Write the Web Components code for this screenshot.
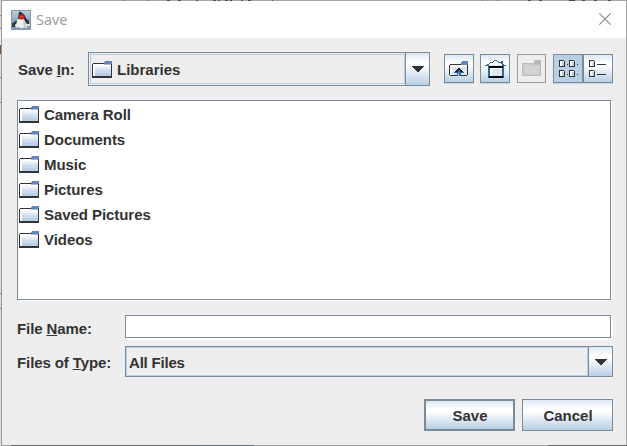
<!DOCTYPE html>
<html lang="en"><head><meta charset="utf-8"><title>Save</title>
<style>
html,body{margin:0;width:627px;height:446px;overflow:hidden;background:#a5a5a5}
body{font:bold 15px/18px "Liberation Sans",Arial,sans-serif;color:#333}
</style></head><body>
<save-dialog></save-dialog>
<script>
const define=(name,html,setup)=>{
  const t=document.createElement('template');t.innerHTML=html;
  customElements.define(name,class extends HTMLElement{
    constructor(){super();this.attachShadow({mode:'open'}).append(t.content.cloneNode(true));}
    connectedCallback(){if(setup)setup(this,this.shadowRoot);}
  });
};
const svg=(w,h,s)=>`<svg width="${w}" height="${h}" viewBox="0 0 ${w} ${h}" shape-rendering="crispEdges">${s}</svg>`;

define('folder-icon',`<style>:host{display:block;width:20px;height:17px;flex:none}svg{display:block}</style>
${svg(20,17,`<path fill="#333" d="M1 2h11v1h8v14H0V3h1z"/><path fill="#fff" d="M1 3h11v1h7v11H1z"/>
<path fill="#eef3fa" d="M3 5h16v2H3z"/><path fill="#dce7f3" d="M3 7h16v2H3z"/><path fill="#cadbed" d="M3 9h16v3H3z"/><path fill="#b8cfe5" d="M3 12h16v3H3z"/>
<path fill="#6382bf" d="M13 0h7v3h-8V1h1z"/><path fill="#a3b8cc" d="M12 3h7v1h-7z"/>`)}`);

define('java-icon',`<style>:host{display:block;width:20px;height:20px}svg{display:block}</style>
<svg width="20" height="20" viewBox="0 0 20 20"><defs><linearGradient id="g" x2="0" y2="1"><stop stop-color="#c6d3dd"/><stop offset=".5" stop-color="#8fa8bb"/><stop offset="1" stop-color="#8299ac"/></linearGradient></defs>
<rect width="20" height="20" fill="url(#g)"/><path fill="#d3dce3" d="M1 14h18v2H1z"/><path fill="#2b3138" d="M8 1.500l2 .5 3.500 3 2 4 2.500 2v3l-3-1-1-2-7 0-2 3-3 2-1-1 2-3 4-2z"/>
<path fill="#eee" d="M6 10l2-1h5l1.500 4 1.500 5-3-.5-3 1-2-1.500-3 1z"/><path fill="#bcc5cc" d="M12 10l2 3 1 5-2-1z"/><path fill="#333a42" d="M1 13h3v4H1zM16 11h2v3h-2z"/>
<circle cx="10.800" cy="7" r="2.600" fill="#d81a18"/><circle cx="10.400" cy="6.600" r="1" fill="#ff5147"/><path d="M.5.5h19v19H.5z" fill="none" stroke="#8398aa"/></svg>`);

define('title-bar',`<style>:host{display:flex;align-items:center;height:37px;background:#fff;padding:0 15px 0 9px;box-sizing:border-box}
.t{font:14.500px/20px "Open Sans","Noto Sans",sans-serif;color:#999;margin:0 auto 0 5px}
svg{display:block;margin-bottom:1px}</style><java-icon></java-icon><span class="t"><slot></slot></span>
<svg width="12" height="12" viewBox="0 0 12 12"><path d="M.3.3l11.400 11.400M11.700.3L.3 11.700" stroke="#888" stroke-width="1.100"/></svg>`);

define('combo-box',`<style>:host{display:flex;box-sizing:border-box;border:1px solid #7a8a99}
.v{flex:1;display:flex;align-items:center;gap:5px;border:1px solid #b8cfe5;background:#eee;padding-left:var(--pad,2px);min-width:0}
:host([outset]) .v{margin:1px 0 1px 1px}::slotted(span){padding-top:2px}
.b{width:23px;box-sizing:content-box;border-left:1px solid #7a8a99;display:flex;align-items:center;justify-content:center;background:linear-gradient(#dde8f3,#fff 30%,#fff 38%,#b8cfe5)}
svg{display:block}</style><div class="v"><slot></slot></div><div class="b">${svg(12,6,'<path fill="#333" d="M0 0h12v1h-1v1h-1v1H9v1H8v1H7v1H5V5H4V4H3V3H2V2H1V1H0z"/>')}</div>`);

const art={
up:`<path fill="#333" d="M0 4h1V3h11v1H1v10H0zM1 14h17v1H1zM18 4h1v10h-1z"/><path fill="#fff" d="M1 4h17v10H1z"/><path fill="#dce7f3" d="M3 6h15v8H3z"/><path fill="#6382bf" d="M13 0h6v4h-7V1h1z"/><path fill="#222" d="M9 7h2v1h1v1h1v1h1v1h-3V9H9v2H6v-1h1V9h1V8h1z"/><path fill="#3068a0" d="M5 11h4V9h2v2h4v1h-3v3H8v-3H5z"/><path fill="#b8cfe5" d="M9 12h1v3H9z"/>`,
home:`<path fill="#fff" d="M9 1h3l6 4H3z"/><path fill="#3068a0" d="M9 0h3v1H9zM8 1h1v1H8zM12 1h1v1h-1zM5 2h3v1H5zM13 2h3v1h-3zM4 3h1v1H4zM16 1h2v3h-2zM2 4h2v1H2zM17 4h2v1h-2zM0 5h21v1h-2v12h-2V7H5v11H3V6H0z"/><path fill="#fff" d="M5 7h12v9H5z"/><path fill="#dce7f3" d="M7 9h10v7H7z"/><path fill="#000" d="M4 6h14v2H4zM4 16h14v2H4z"/><path fill="#dce7f3" d="M4 5h13v1H4z"/>`,
folder:`<path fill="#bbb" d="M0 3h12V0h7v16H0z"/><path fill="#ccc" d="M1 4h11v1h6v10H1z"/><path fill="#d3d3d3" d="M3 6h14v8H3z"/><path fill="#b8b8b8" d="M12 0h6v4h-6z"/>`,
grid:[0,10].map(y=>[0,10].map(x=>`<path fill="#333" d="M${x} ${y}h5v1h1v6h-6z"/><path fill="#fff" d="M${x+1} ${y+1}h4v5h-4z"/><path fill="#b8cfe5" d="M${x+3} ${y+2}h2v4h-2z"/><path fill="#333" d="M${x+8} ${y+4}h1v1h-1z"/>`).join('')).join(''),
list:[0,10].map(y=>`<path fill="#333" d="M0 ${y}h5v1h1v6H0zM8 ${y+4}h9v1H8z"/><path fill="#fff" d="M1 ${y+1}h4v5H1z"/><path fill="#cadbed" d="M3 ${y+2}h2v4H3z"/>`).join('')};
/* width, height, left and top padding of each glyph */
const place={up:[19,15,4,6],home:[21,19,4,5],folder:[19,16,4,5],grid:[19,17,5,5],list:[17,17,5,5]};
define('tool-button',`<style>:host{display:block;width:30px;height:29px;box-sizing:border-box;border:1px solid #7a8a99;background:linear-gradient(#dde8f3,#fff 30%,#fff 38%,#b8cfe5);box-shadow:0 1px #c5d5e4}
:host([kind=folder]){width:29px;background:#eee;border-color:#999;box-shadow:none}:host([kind=grid]){background:#b8cfe5}svg{display:block}</style><div></div>`,
(h,r)=>{const k=h.getAttribute('kind'),[w,hh,x,y]=place[k],d=r.querySelector('div');d.style.padding=`${y}px 0 0 ${x}px`;d.innerHTML=svg(w,hh,art[k]);});

define('file-item',`<style>:host{display:flex;align-items:center;gap:5px;height:25px}span{letter-spacing:-.06px}</style><folder-icon></folder-icon><span><slot></slot></span>`);
define('file-list',`<style>:host{display:block;box-sizing:border-box;width:594px;height:200px;border:1px solid #7a8a99;background:#fff;box-shadow:1px 1px #fff;padding:1px}</style><slot></slot>`);
define('mnemonic-label',`<style>:host{display:block;white-space:nowrap;letter-spacing:-.1px}::slotted(u){text-decoration:underline 1px;text-underline-offset:1px;text-decoration-skip-ink:none}</style><slot></slot>`);
define('text-field',`<style>:host{display:block;box-sizing:border-box;width:486px;height:23px;border:1px solid #7a8a99;background:#fff;box-shadow:1px 1px #fff,2px 2px #fff}</style>`);
define('push-button',`<style>:host{display:flex;align-items:center;justify-content:center;box-sizing:border-box;width:91px;height:32px;padding:2px 0 0 1px;border:1px solid #7a8a99;background:linear-gradient(#dde8f3,#fff 30%,#fff 38%,#b8cfe5)}:host([default]){border-width:2px}</style><slot></slot>`);

define('save-dialog',`<style>
:host{display:block;box-sizing:border-box;width:627px;height:446px;padding:1px 1px 1px 2px;
background:linear-gradient(90deg,#9a9a9a,#999) 1px 0/1px 446px no-repeat,
linear-gradient(#dadada 15px,#7a8a99 15px 16px,#dadada 16px 28px,#6382bf 28px 29px,#eee 29px 45px,#79502f 45px 54px,#ddd 54px 77px,#888 77px 78px,#ddd 78px 102px,#777 102px 103px,#ddd 103px 293px,#7a8a99 293px 294px,#ddd 294px 308px,#6382bf 308px 309px,#ddd 309px) 0 0/1px 446px no-repeat,
linear-gradient(90deg,#a0a0a0 11px,#68686c 11px 200px,#65717c 200px 254px,#a0a0a0 254px 548px,#68686c 548px) 0 445px/627px 1px no-repeat,
linear-gradient(90deg,transparent 124px,#678 124px 125px,transparent 125px 148px,#678 148px 149px,transparent 149px 167px,#544 167px 170px,transparent 170px 178px,#544 178px 181px,transparent 181px 196px,#544 196px 198px,transparent 198px 213px,#544 213px 216px,transparent 216px 218px,#555 218px 220px,transparent 220px 225px,#544 225px 228px,transparent 228px 230px,#345 230px 232px,transparent 232px 241px,#544 241px 243px,transparent 243px 248px,#345 248px 251px,transparent 251px 272px,#555 272px 273px,transparent 273px 482px,#678 482px 483px,transparent 483px 497px,#678 497px 498px,transparent 498px 528px,#544 528px 531px,transparent 531px 539px,#544 539px 542px,transparent 542px 569px,#544 569px 575px,transparent 575px 582px,#544 582px 585px,transparent 585px 594px,#544 594px 597px,transparent 597px 608px,#544 608px 611px,transparent 611px) 0 0/627px 1px no-repeat,#a5a5a5}
.win{height:444px;background:#eee}
.body{padding:14px 13px 0 15px}
.top{display:grid;grid-template-columns:71px 342px 14px auto;height:34px;align-items:center}
.top combo-box{height:34px}.tools{display:flex;height:29px;margin-bottom:1px}
.tools tool-button:nth-child(2){margin-left:6px}.tools tool-button:nth-child(3){margin-left:7px}.tools tool-button:nth-child(4){margin-left:7px}
.top mnemonic-label{padding:2px 0 0 1px}
file-list{margin-top:14px}
.form{display:grid;grid-template-columns:108px 1fr;grid-template-rows:23px 31px;row-gap:8px;margin-top:15px;align-items:center}
.form mnemonic-label:first-child{padding-top:4px}.form mnemonic-label{padding-top:2px}.form combo-box{height:31px;--pad:2px;letter-spacing:-.2px}
.actions{display:flex;justify-content:flex-end;gap:7px;margin-top:22px}
</style>
<div class="win"><title-bar>Save</title-bar><div class="body">
<div class="top"><mnemonic-label>Save <u>I</u>n:</mnemonic-label><combo-box outset style="--pad:1px"><folder-icon></folder-icon><span>Libraries</span></combo-box><i></i>
<div class="tools"><tool-button kind="up"></tool-button><tool-button kind="home"></tool-button><tool-button kind="folder"></tool-button><tool-button kind="grid"></tool-button><tool-button kind="list"></tool-button></div></div>
<file-list><file-item>Camera Roll</file-item><file-item>Documents</file-item><file-item>Music</file-item><file-item>Pictures</file-item><file-item>Saved Pictures</file-item><file-item>Videos</file-item></file-list>
<div class="form"><mnemonic-label>File <u>N</u>ame:</mnemonic-label><text-field></text-field><mnemonic-label>Files of <u>T</u>ype:</mnemonic-label><combo-box><span>All Files</span></combo-box></div>
<div class="actions"><push-button default>Save</push-button><push-button>Cancel</push-button></div>
</div></div>`);
</script></body></html>
